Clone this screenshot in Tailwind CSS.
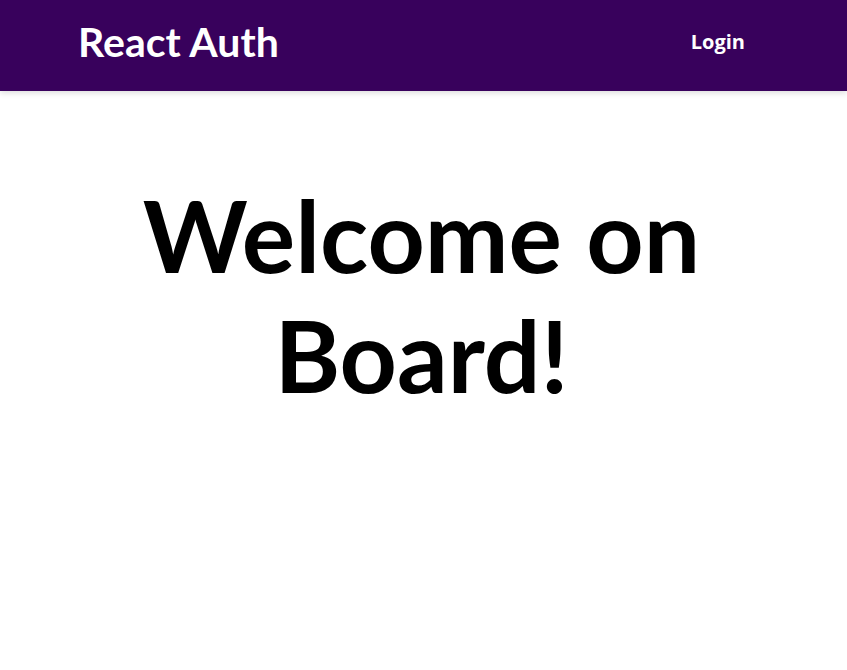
<!DOCTYPE html>
<html lang="en">
<head>
<meta charset="utf-8">
<title>React Auth</title>
<script src="https://cdn.jsdelivr.net/npm/@tailwindcss/browser@4"></script>
</head>
<body class="bg-white text-black font-['Open_Sans',sans-serif]">
<header class="flex items-center justify-between bg-[#38015c] px-[78px] pt-[18px] pb-[25px] text-white shadow-[0_2px_6px_rgba(0,0,0,0.14)]">
<a href="#" class="font-['Lato',sans-serif] text-[41px] leading-[48px] font-bold">React Auth</a>
<nav class="pr-6"><a href="#" class="text-xl leading-7 font-bold">Login</a></nav>
</header>
<main class="pt-[83px] pr-20 pb-20 pl-[76px] text-center">
<h1 class="font-['Lato',sans-serif] text-[100px] leading-[120px] font-bold">Welcome on Board!</h1>
</main>
</body>
</html>
